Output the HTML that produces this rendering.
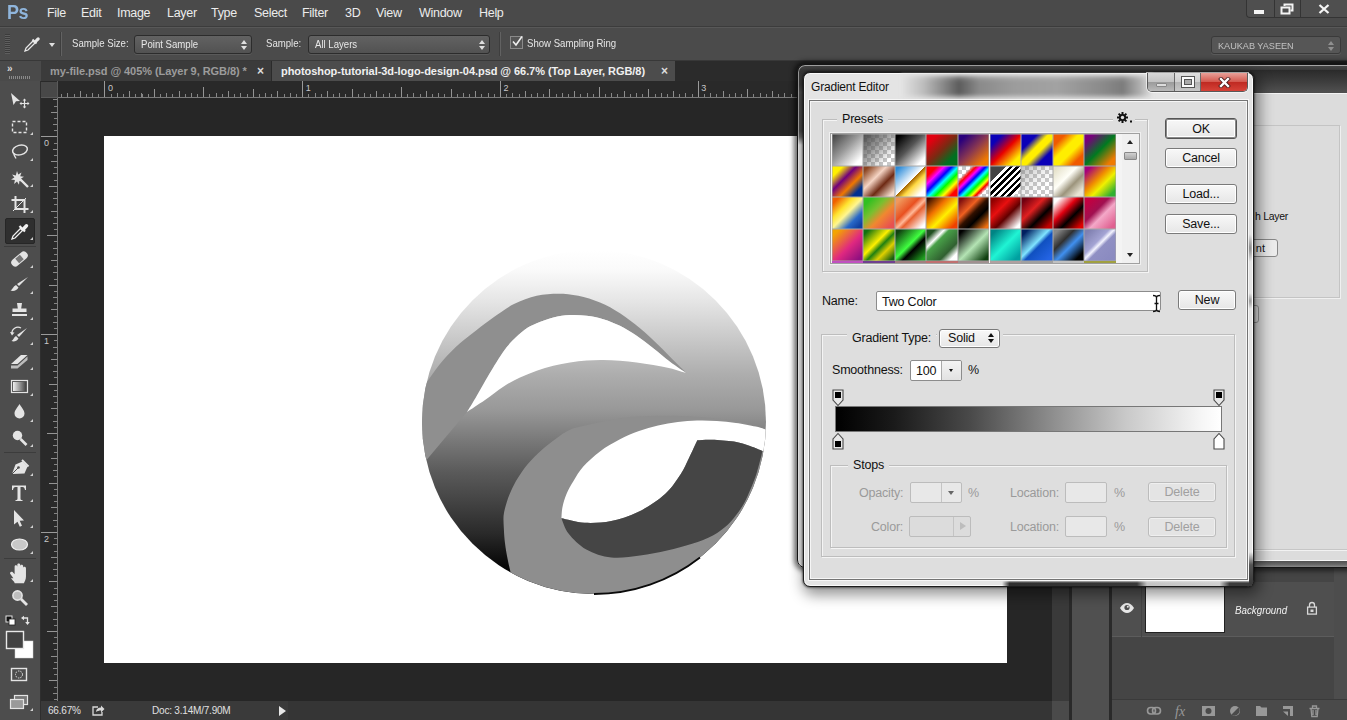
<!DOCTYPE html>
<html><head><meta charset="utf-8"><title>Photoshop</title>
<style>
*{box-sizing:border-box;margin:0;padding:0}
html,body{width:1347px;height:720px;overflow:hidden;background:#262626;font-family:"Liberation Sans",sans-serif;}
.abs{position:absolute}
#root{position:relative;width:1347px;height:720px;overflow:hidden;background:#262626}
/* menu bar */
#menubar{left:0;top:0;width:1347px;height:27px;background:#4a4a4a;border-bottom:1px solid #3c3c3c}
#menubar span{position:absolute;top:6px;font-size:12.5px;color:#ececec;white-space:nowrap;letter-spacing:-.3px}
#pslogo{position:absolute;left:7px;top:1px;font-size:20px;font-weight:bold;color:#8fb5dc;letter-spacing:-0.5px;transform:scaleX(.9);transform-origin:0 0}
.wbtn{position:absolute;top:0;height:18px;background:#4f4f4f;border-left:1px solid #343434;border-bottom:1px solid #343434}
/* options bar */
#optbar{left:0;top:27px;width:1347px;height:34px;background:#4b4b4b;border-top:1px solid #585858;border-bottom:1px solid #383838}
#optbar .lbl{position:absolute;top:9px;font-size:11.5px;color:#e6e6e6;white-space:nowrap;transform:scaleX(.835);transform-origin:0 0}
.dd{position:absolute;height:19px;background:linear-gradient(#626262,#525252);border:1px solid #2c2c2c;border-radius:3px;box-shadow:0 1px 0 #5a5a5a;font-size:11.5px;color:#e8e8e8;white-space:nowrap}
.dd i{position:absolute;left:6px;top:2px;font-style:normal;transform:scaleX(.835);transform-origin:0 0}
.dd:after{content:"";position:absolute;right:4px;top:4px;border:3px solid transparent;border-bottom:4px solid #e0e0e0;border-top:0}
.dd:before{content:"";position:absolute;right:4px;top:10px;border:3px solid transparent;border-top:4px solid #e0e0e0;border-bottom:0}
#kdd:after{border-bottom-color:#909090;right:6px}#kdd:before{border-top-color:#909090;right:6px}
/* tabs */
#tabbar{left:0;top:61px;width:1347px;height:20px;background:#2b2b2b}
.tab{position:absolute;top:0;height:20px;font-size:11px;font-weight:bold;white-space:nowrap;padding-top:4px;letter-spacing:-.06px}
/* ruler */
.ruler{background:#2b2b2b}
.rnum{position:absolute;font-size:9px;color:#c8c8c8}
</style></head><body><div id="root">
<!-- canvas area -->
<div class="abs" style="left:57px;top:98px;width:995px;height:603px;background:#262626"></div>
<div class="abs" id="doc" style="left:104px;top:136px;width:903px;height:527px;background:#fff"></div>

<!-- menubar -->
<div class="abs" id="menubar">
<div id="pslogo">Ps</div>
<span style="left:47px">File</span><span style="left:81px">Edit</span><span style="left:117px">Image</span><span style="left:167px">Layer</span><span style="left:211px">Type</span><span style="left:254px">Select</span><span style="left:302px">Filter</span><span style="left:345px">3D</span><span style="left:376px">View</span><span style="left:419px">Window</span><span style="left:479px">Help</span>
<div class="wbtn" style="left:1246px;width:28px;border-radius:0 0 0 4px"><div class="abs" style="left:7px;top:10px;width:10px;height:3.500px;background:#f4f4f4"></div></div>
<div class="wbtn" style="left:1274px;width:26px">
 <svg class="abs" style="left:5px;top:3px" width="14" height="12" viewBox="0 0 14 12"><path d="M4.500 3V1.500h8v6h-2" fill="none" stroke="#f4f4f4" stroke-width="2"/><rect x="1.500" y="4.500" width="8" height="6" fill="#4f4f4f" stroke="#f4f4f4" stroke-width="2"/></svg>
</div>
<div class="wbtn" style="left:1300px;width:47px"><svg class="abs" style="left:17px;top:4px" width="12" height="10" viewBox="0 0 12 10"><path d="M1.500 1l9 8M10.500 1l-9 8" stroke="#f4f4f4" stroke-width="2.300"/></svg></div>
</div>

<!-- options bar -->
<div class="abs" id="optbar">
 <div class="abs" style="left:5px;top:6px;width:5px;height:20px;background:repeating-linear-gradient(to bottom,#3c3c3c 0 1px,#5e5e5e 1px 2px)"></div>
 <svg class="abs" style="left:23px;top:7px" width="18" height="18" viewBox="0 0 18 18"><path d="M2 16l1-3 7-7 2 2-7 7z" fill="none" stroke="#e8e8e8" stroke-width="1.3"/><path d="M9.5 4.5l4 4" stroke="#e8e8e8" stroke-width="2"/><path d="M11 6l3-3.2a1.6 1.6 0 0 1 2.3 2.3L13 8z" fill="#e8e8e8"/></svg>
 <div class="abs" style="left:49px;top:15px;border:3.5px solid transparent;border-top:4px solid #e0e0e0;border-bottom:0"></div>
 <div class="abs" style="left:60px;top:4px;width:1px;height:24px;background:#3e3e3e;box-shadow:1px 0 0 #626262"></div>
 <span class="lbl" style="left:72px">Sample Size:</span>
 <div class="dd" style="left:134px;top:7px;width:118px"><i>Point Sample</i></div>
 <span class="lbl" style="left:266px">Sample:</span>
 <div class="dd" style="left:308px;top:7px;width:182px"><i>All Layers</i></div>
 <div class="abs" style="left:499px;top:4px;width:1px;height:24px;background:#3e3e3e;box-shadow:1px 0 0 #626262"></div>
 <div class="abs" style="left:510px;top:8px;width:13px;height:13px;background:#555;border:1px solid #8a8a8a"></div>
 <svg class="abs" style="left:510px;top:6px" width="15" height="15" viewBox="0 0 15 15"><path d="M3 7.5l3 3.5 6-8.5" fill="none" stroke="#f0f0f0" stroke-width="1.6"/></svg>
 <span class="lbl" style="left:527px">Show Sampling Ring</span>
 <div class="dd" style="left:1211px;top:8px;width:130px;height:18px;color:#c2c2c2;font-size:9.500px;background:#565656;border-color:#3a3a3a" id="kdd"><i style="transform:scaleX(.96);top:3px">KAUKAB YASEEN</i></div>
</div>

<!-- tab bar -->
<div class="abs" id="tabbar">
 <div class="abs" style="left:0;top:0;width:41px;height:20px;background:#4a4a4a"></div>
 <div class="abs" style="left:7px;top:2px;font-size:10px;font-weight:bold;color:#d8d8d8;letter-spacing:-1px">&#187;</div>
 <div class="tab" style="left:41px;width:230px;background:#3b3b3b;color:#9c9c9c;padding-left:9px">my-file.psd @ 405% (Layer 9, RGB/8) *<span style="position:absolute;left:216px;top:3px;color:#dcdcdc;font-size:12px">&#215;</span></div>
 <div class="tab" style="left:272px;width:403px;background:#4c4c4c;color:#f0f0f0;padding-left:9px">photoshop-tutorial-3d-logo-design-04.psd @ 66.7% (Top Layer, RGB/8)<span style="position:absolute;left:389px;top:3px;color:#dcdcdc;font-size:12px">&#215;</span></div>
</div>

<!-- rulers -->
<div class="abs ruler" style="left:41px;top:81px;width:1011px;height:17px;border-bottom:1px solid #7a7a7a;overflow:hidden;
 background:
 repeating-linear-gradient(to right,#9a9a9a 0 1px,transparent 1px 197.8000px) -134.40px 0.0px/1209px 16px no-repeat,
 repeating-linear-gradient(to right,#959595 0 1px,transparent 1px 98.9000px) -35.50px 5.5px/1110px 10.5px no-repeat,
 repeating-linear-gradient(to right,#939393 0 1px,transparent 1px 49.4500px) -35.50px 7.5px/1060px 8.5px no-repeat,
 repeating-linear-gradient(to right,#8e8e8e 0 1px,transparent 1px 24.7250px) -10.78px 10.0px/1036px 6px no-repeat,
 repeating-linear-gradient(to right,#888 0 1px,transparent 1px 12.3625px) -10.78px 11.5px/1023px 4.5px no-repeat,
 repeating-linear-gradient(to right,#848484 0 1px,transparent 1px 6.1813px) -4.59px 13.0px/1017px 3px no-repeat,
 #292929">
 <span class="rnum" style="left:66.9px;top:2px">0</span><span class="rnum" style="left:264.7px;top:2px">1</span><span class="rnum" style="left:462.5px;top:2px">2</span><span class="rnum" style="left:660.3px;top:2px">3</span>
</div>
<div class="abs ruler" style="left:41px;top:98px;width:17px;height:603px;border-right:1px solid #7a7a7a;overflow:hidden;
 background:
 repeating-linear-gradient(to bottom,#9a9a9a 0 1px,transparent 1px 197.8000px) 0.0px -159.40px/16px 801px no-repeat,
 repeating-linear-gradient(to bottom,#959595 0 1px,transparent 1px 98.9000px) 5.5px -60.50px/10.5px 702px no-repeat,
 repeating-linear-gradient(to bottom,#939393 0 1px,transparent 1px 49.4500px) 7.5px -11.05px/8.5px 652px no-repeat,
 repeating-linear-gradient(to bottom,#8e8e8e 0 1px,transparent 1px 24.7250px) 10.0px -11.05px/6px 628px no-repeat,
 repeating-linear-gradient(to bottom,#888 0 1px,transparent 1px 12.3625px) 11.5px -11.05px/4.5px 615px no-repeat,
 repeating-linear-gradient(to bottom,#848484 0 1px,transparent 1px 6.1813px) 13.0px -4.87px/3px 609px no-repeat,
 #292929">
 <span class="rnum" style="left:3px;top:39.9px">0</span><span class="rnum" style="left:3px;top:237.7px">1</span><span class="rnum" style="left:3px;top:435.5px">2</span>
</div>
<div class="abs" style="left:41px;top:81px;width:17px;height:17px;background:#292929;border-right:1px solid #5a5a5a;border-bottom:1px solid #5a5a5a"><div class="abs" style="left:0;top:1px;width:16px;height:15px;background:#484848"></div></div>

<!-- status bar -->
<div class="abs" style="left:41px;top:701px;width:1011px;height:19px;background:#353535"></div>
<div class="abs" style="left:41px;top:701px;width:247px;height:19px;background:#3a3a3a;font-size:10px;color:#e0e0e0;letter-spacing:-.2px">
 <span class="abs" style="left:7px;top:4px">66.67%</span>
 <svg class="abs" style="left:50px;top:3px" width="15" height="13" viewBox="0 0 15 13"><path d="M7 3H2v8h9V8" fill="none" stroke="#d8d8d8" stroke-width="1.3"/><path d="M5 8c0-3 2-4.5 5-4.5V1.5l3.5 3.5L10 8.500V6.500C8 6.500 6.500 7 5 8z" fill="#d8d8d8"/></svg>
 <span class="abs" style="left:111px;top:4px">Doc: 3.14M/7.90M</span>
 <div class="abs" style="left:238px;top:5px;border:5px solid transparent;border-left:7px solid #e8e8e8;border-right:0"></div>
</div>
<!-- vertical scrollbar -->
<div class="abs" style="left:1052px;top:81px;width:17px;height:620px;background:#3a3a3a"></div>
<div class="abs" style="left:1052px;top:701px;width:17px;height:19px;background:#4a4a4a"></div>
<!-- right panels -->
<div class="abs" style="left:1069px;top:61px;width:3px;height:659px;background:#2a2a2a"></div>
<div class="abs" style="left:1072px;top:61px;width:37px;height:659px;background:#505050"></div>
<div class="abs" style="left:1109px;top:61px;width:3px;height:659px;background:#2a2a2a"></div>
<div class="abs" style="left:1112px;top:61px;width:235px;height:659px;background:#454545"></div>
<div class="abs" style="left:1112px;top:582px;width:222px;height:55px;background:#4f4f4f;border-bottom:1px solid #5c5c5c"></div>
<div class="abs" style="left:1334px;top:560px;width:13px;height:140px;background:#4d4d4d"></div>
<div class="abs" style="left:1141px;top:582px;width:1px;height:55px;background:#444"></div>
<div class="abs" style="left:1069px;top:61px;width:278px;height:4px;background:#262626"></div>
<!-- layer row -->
<svg class="abs" style="left:1119px;top:602px" width="16" height="12" viewBox="0 0 16 12"><path d="M1 6c2-3.500 4.500-5 7-5s5 1.500 7 5c-2 3.500-4.500 5-7 5S3 9.500 1 6z" fill="#e8e8e8"/><circle cx="8" cy="5.500" r="2.600" fill="#4f4f4f"/><circle cx="8.800" cy="4.800" r="1" fill="#e8e8e8"/></svg>
<div class="abs" style="left:1145px;top:585px;width:80px;height:48px;background:#fff;border:1px solid #222"></div>
<div class="abs" style="left:1235px;top:604px;font-size:10.500px;font-style:italic;color:#f2f2f2;transform:scaleX(.93);transform-origin:0 0">Background</div>
<svg class="abs" style="left:1306px;top:601px" width="12" height="15" viewBox="0 0 12 15"><path d="M3.500 6V4a2.500 2.500 0 0 1 5 0v2" fill="none" stroke="#d8d8d8" stroke-width="1.300"/><rect x="1.600" y="6.100" width="8.800" height="7" fill="none" stroke="#d8d8d8" stroke-width="1.300"/><rect x="4.500" y="8.500" width="3" height="2.500" fill="#d8d8d8"/></svg>
<!-- panel bottom bar -->
<div class="abs" style="left:1112px;top:699px;width:235px;height:21px;background:#4a4a4a;border-top:1px solid #3a3a3a"></div>
<svg class="abs" style="left:1146px;top:703px" width="190" height="16" viewBox="0 0 190 16">
 <g fill="none" stroke="#989898" stroke-width="1.600"><rect x="1.500" y="4.500" width="8" height="6.500" rx="3.200"/><rect x="6.500" y="4.500" width="8" height="6.500" rx="3.200"/></g>
 <text x="29" y="13" font-family="Liberation Serif" font-style="italic" font-size="14" fill="#989898">fx</text>
 <rect x="56" y="3" width="13" height="10" fill="#989898"/><circle cx="62.500" cy="8" r="3" fill="#4a4a4a"/>
 <circle cx="89" cy="8" r="5" fill="#989898"/><path d="M85.500 11.500A5 5 0 0 0 92.500 4.500z" fill="#4a4a4a"/>
 <path d="M110 3h4l1.500 1.500H121V13h-11z" fill="#989898"/>
 <path d="M137 3h10v10h-3V6h-7z" fill="#989898"/><path d="M137 8.500h5V13z" fill="#989898"/>
 <path d="M163.500 5.500h10M165 5.500l.8 8h5.400l.8-8M166.500 5v-2h4v2M167 7v5M170 7v5" fill="none" stroke="#989898" stroke-width="1.300"/>
</svg>
<svg class="abs" style="left:404px;top:240px" width="380" height="370" viewBox="404 240 380 370">
<defs>
<linearGradient id="lg" gradientUnits="userSpaceOnUse" x1="0" y1="250" x2="0" y2="580">
<stop offset="0" stop-color="#ffffff"/><stop offset="0.06" stop-color="#fafafa"/><stop offset="0.152" stop-color="#e6e6e6"/><stop offset="0.303" stop-color="#c0c0c0"/><stop offset="0.379" stop-color="#adadad"/><stop offset="0.485" stop-color="#989898"/><stop offset="0.579" stop-color="#787878"/><stop offset="0.673" stop-color="#5a5a5a"/><stop offset="0.764" stop-color="#434343"/><stop offset="0.858" stop-color="#2a2a2a"/><stop offset="0.955" stop-color="#080808"/><stop offset="1" stop-color="#000"/>
</linearGradient>
<clipPath id="cc"><circle cx="594" cy="422" r="172"/></clipPath>
</defs>
<g clip-path="url(#cc)">
<rect x="404" y="240" width="380" height="370" fill="url(#lg)"/>
<path d="M415.0 400.0C417.2 396.7 423.6 386.7 428.3 380.0C433.0 373.3 438.0 366.1 443.3 360.0C448.6 353.9 454.4 348.3 460.0 343.3C465.6 338.3 471.1 334.3 476.7 330.0C482.2 325.7 487.1 321.8 493.3 317.5C499.5 313.2 506.8 307.6 514.0 304.0C521.2 300.4 529.3 297.5 536.7 295.8C544.1 294.1 551.4 293.7 558.3 293.7C565.2 293.7 571.3 294.3 578.3 295.8C585.2 297.3 593.0 299.6 600.0 302.5C607.0 305.4 613.3 309.0 620.0 313.3C626.7 317.6 633.6 323.0 640.0 328.3C646.4 333.6 652.5 339.4 658.3 345.0C664.1 350.6 670.3 357.0 675.0 361.7C679.7 366.4 684.8 371.4 686.7 373.3C683.9 371.4 675.6 365.9 670.0 361.7C664.4 357.5 658.8 352.6 653.3 348.3C647.8 344.0 642.2 339.6 636.7 335.8C631.2 332.1 625.6 328.6 620.0 325.8C614.4 323.0 608.8 320.9 603.3 319.2C597.8 317.5 592.2 316.5 586.7 315.8C581.2 315.1 575.6 314.7 570.0 315.0C564.4 315.3 558.8 316.1 553.3 317.5C547.8 318.9 541.4 321.3 536.7 323.3C532.0 325.3 529.0 326.6 525.0 329.5C521.0 332.4 516.1 336.8 512.5 340.5C508.9 344.2 506.8 346.8 503.3 351.7C499.8 356.6 495.0 364.6 491.7 370.0C488.4 375.4 486.2 379.3 483.5 384.0C480.8 388.7 478.2 393.3 475.5 398.0C472.8 402.7 468.4 409.7 467.0 412.0L445.0 438.0L425.7 461.0L405.0 470.0L405.0 395.0Z" fill="#8f8f8f"/>
<path d="M686.7 373.3C683.9 371.4 675.6 365.9 670.0 361.7C664.4 357.5 658.8 352.6 653.3 348.3C647.8 344.0 642.2 339.6 636.7 335.8C631.2 332.1 625.6 328.6 620.0 325.8C614.4 323.0 608.8 320.9 603.3 319.2C597.8 317.5 592.2 316.5 586.7 315.8C581.2 315.1 575.6 314.7 570.0 315.0C564.4 315.3 558.8 316.1 553.3 317.5C547.8 318.9 541.4 321.3 536.7 323.3C532.0 325.3 529.0 326.6 525.0 329.5C521.0 332.4 516.1 336.8 512.5 340.5C508.9 344.2 506.8 346.8 503.3 351.7C499.8 356.6 495.0 364.6 491.7 370.0C488.4 375.4 486.2 379.3 483.5 384.0C480.8 388.7 478.2 393.3 475.5 398.0C472.8 402.7 468.4 409.7 467.0 412.0C470.0 410.0 478.9 404.2 485.0 400.0C491.1 395.8 497.5 390.4 503.3 386.7C509.1 382.9 514.4 380.1 520.0 377.5C525.6 374.9 531.2 372.8 536.7 370.8C542.2 368.9 547.8 367.2 553.3 365.8C558.8 364.4 564.4 363.4 570.0 362.5C575.6 361.6 581.2 360.9 586.7 360.5C592.2 360.1 597.8 359.9 603.3 360.0C608.8 360.1 614.4 360.4 620.0 360.8C625.6 361.2 631.2 361.8 636.7 362.5C642.2 363.2 647.8 364.0 653.3 365.0C658.8 366.0 664.4 366.9 670.0 368.3C675.6 369.7 683.9 372.5 686.7 373.3Z" fill="#fff"/>
<path d="M765.8 429.5C761.5 428.2 749.0 423.9 740.0 422.0C731.0 420.1 722.0 419.0 712.0 418.0C702.0 417.0 690.3 416.3 680.0 416.0C669.7 415.7 659.2 415.8 650.0 416.0C640.8 416.2 633.3 416.5 625.0 417.5C616.7 418.5 606.5 420.9 600.0 422.2C593.5 423.5 591.1 424.0 586.0 425.3C580.9 426.6 574.5 427.6 569.4 429.9C564.3 432.2 560.2 435.5 555.6 438.9C551.0 442.2 546.3 445.8 541.7 450.0C537.1 454.2 531.8 459.3 527.8 463.9C523.8 468.5 520.8 473.3 518.0 477.8C515.2 482.3 512.9 486.8 511.0 491.0C509.1 495.2 507.7 498.9 506.5 503.0C505.3 507.1 504.0 511.2 503.6 515.6C503.2 520.0 503.7 524.8 503.9 529.4C504.1 534.0 504.4 538.2 505.0 543.3C505.6 548.4 506.6 554.2 507.8 560.0C509.0 565.8 511.3 575.0 512.0 578.0L510.0 610.0L790.0 610.0L790.0 429.5Z" fill="#8e8e8e"/>
<path d="M561.4 518.3C561.6 516.4 561.6 511.1 562.5 507.0C563.4 502.9 564.7 498.3 566.5 494.0C568.3 489.7 570.7 485.6 573.5 481.0C576.3 476.4 578.9 471.4 583.3 466.5C587.7 461.6 594.0 455.9 600.0 451.4C606.0 446.9 613.0 442.9 619.5 439.5C626.0 436.1 632.6 433.3 639.0 431.0C645.4 428.7 651.5 427.0 658.0 425.5C664.5 424.0 671.3 422.8 677.8 422.0C684.3 421.2 690.5 420.7 697.0 420.5C703.5 420.3 710.2 420.5 716.7 420.9C723.2 421.3 729.5 421.9 736.0 422.9C742.5 423.8 750.6 425.5 755.6 426.6C760.6 427.7 764.0 429.0 765.7 429.5L790.0 429.5L790.0 451.0L762.4 451.0C760.3 450.2 754.7 447.6 750.0 446.0C745.3 444.4 740.3 442.7 734.0 441.6C727.7 440.6 718.1 439.9 712.0 439.7C705.9 439.5 699.8 440.1 697.3 440.2C695.9 443.2 691.6 452.7 688.9 458.3C686.1 463.9 684.8 468.0 680.8 474.0C676.8 480.0 671.9 487.9 664.8 494.3C657.7 500.7 646.9 507.7 638.0 512.1C629.1 516.6 620.2 519.2 611.3 521.0C602.4 522.8 592.9 523.2 584.6 522.8C576.3 522.3 565.3 519.0 561.4 518.3Z" fill="#fff"/>
<path d="M697.3 440.2C699.8 440.1 705.9 439.5 712.0 439.7C718.1 439.9 727.7 440.6 734.0 441.6C740.3 442.7 745.3 444.4 750.0 446.0C754.7 447.6 760.3 450.2 762.4 451.0C762.1 452.2 761.8 454.4 760.8 458.0C759.8 461.6 758.4 467.6 756.7 472.9C755.0 478.2 752.5 484.6 750.4 489.6C748.3 494.6 746.6 498.8 744.2 503.1C741.8 507.4 738.6 512.0 735.8 515.6C733.0 519.2 731.3 521.7 727.5 525.0C723.7 528.3 718.8 532.3 712.9 535.4C707.0 538.5 699.7 541.3 692.1 543.8C684.5 546.3 675.8 548.5 667.1 550.5C658.4 552.5 649.3 554.3 640.0 555.5C630.7 556.7 620.2 558.5 611.3 557.5C602.3 556.5 593.4 553.5 586.3 549.5C579.2 545.5 572.6 538.7 568.5 533.5C564.4 528.3 562.6 520.8 561.4 518.3C565.3 519.0 576.3 522.3 584.6 522.8C592.9 523.2 602.4 522.8 611.3 521.0C620.2 519.2 629.1 516.6 638.0 512.1C646.9 507.7 657.7 500.7 664.8 494.3C671.9 487.9 676.8 480.0 680.8 474.0C684.8 468.0 686.1 463.9 688.9 458.3C691.6 452.7 695.9 443.2 697.3 440.2Z" fill="#454545"/>
</g>
<path d="M594 594A172 172 0 0 0 700 557.500" fill="none" stroke="#0a0a0a" stroke-width="1.800"/>
</svg>
<!-- toolbar -->
<div class="abs" style="left:0;top:81px;width:41px;height:639px;background:#4d4d4d;border-right:1px solid #2e2e2e"></div>
<div class="abs" style="left:9px;top:76px;width:22px;height:3px;background:repeating-linear-gradient(to right,#8a8a8a 0 1px,transparent 1px 2px)"></div>
<div class="abs" style="left:5px;top:218px;width:30px;height:26px;background:#2f2f2f;border:1px solid #262626;border-radius:2px"></div>
<div class="abs" style="left:4px;top:246px;width:32px;height:1px;background:#3c3c3c"></div>
<div class="abs" style="left:4px;top:452px;width:32px;height:1px;background:#3c3c3c"></div>
<div class="abs" style="left:4px;top:558px;width:32px;height:1px;background:#3c3c3c"></div>
<svg class="abs" style="left:0;top:81px" width="40" height="639" viewBox="0 81 40 639" fill="#e4e4e4" stroke="none">
 <!-- move -->
 <path d="M11 93l9 8-4 .3-2.500 3.700z"/><path d="M24.500 100v7M21 103.500h7" stroke="#e4e4e4" stroke-width="1.200"/><path d="M24.500 98.500l1.800 2h-3.600zM24.500 108.500l1.800-2h-3.600zM19.500 103.500l2-1.800v3.600zM29.500 103.500l-2-1.800v3.600z"/>
 <!-- marquee -->
 <rect x="12.500" y="121.500" width="14" height="11" fill="none" stroke="#e4e4e4" stroke-width="1.400" stroke-dasharray="3 2"/>
 <!-- lasso -->
 <ellipse cx="20" cy="150" rx="7.500" ry="4.800" fill="none" stroke="#e4e4e4" stroke-width="1.500" transform="rotate(-15 20 150)"/><path d="M14.500 153.500c-1.500 1 .5 3 1.500 5" fill="none" stroke="#e4e4e4" stroke-width="1.300"/>
 <!-- magic wand -->
 <path d="M19 178l9 9" stroke="#e4e4e4" stroke-width="2.400"/><path d="M17 171l1.200 3.600 3.300-2-1.300 3.600 3.800.6-3.300 2 2.400 3-3.700-.9-.4 3.800-2-3.300-2.900 2.500.8-3.800-3.800-.5 3.300-2-2.300-3 3.700.9z"/>
 <!-- crop -->
 <path d="M15.500 196v13h13M11.500 200h13v13" fill="none" stroke="#e4e4e4" stroke-width="2"/><path d="M13 211l13-13" stroke="#e4e4e4" stroke-width="1"/>
 <!-- eyedropper -->
 <path d="M12 239l1-3 7.500-7.500 2 2L15 238z" fill="none" stroke="#f0f0f0" stroke-width="1.300"/><path d="M19.500 226l5.500 5.500" stroke="#f0f0f0" stroke-width="2.200"/><path d="M22 228l3.200-3.400a1.700 1.700 0 0 1 2.500 2.500L24.500 230.500z" fill="#f0f0f0"/>
 <!-- healing -->
 <g transform="rotate(-40 19.500 259)"><rect x="10" y="255" width="19" height="8" rx="4" fill="#e4e4e4"/><rect x="16.500" y="256" width="6" height="6" fill="#777"/></g>
 <!-- brush -->
 <path d="M28 277l-9 9-2-2z"/><path d="M16 285l2.500 2.500c-1.500 3-5 4-8 3 2-1 2.500-4 5.500-5.500z"/>
 <!-- stamp -->
 <path d="M17 303h5l-.8 5.500h5.300v3.500h-14v-3.500h5.300z"/><rect x="12" y="314" width="15" height="2"/>
 <!-- history brush -->
 <path d="M27 328l-8 9-2-2z"/><path d="M16 336l2.500 2.500c-1.500 2.500-4.500 3.500-7 2.500 2-1 2-3.500 4.500-5z"/><path d="M12 334a6 6 0 0 1 9-6" fill="none" stroke="#e4e4e4" stroke-width="1.300"/><path d="M10 332l2 3.500 2.500-3z"/>
 <!-- eraser -->
 <path d="M11 364l10-9h6.500l-10 9z"/><path d="M11 365.500l6.500 0 10-9v3.500l-10 8.500H11z" fill="#bdbdbd"/>
 <!-- gradient -->
 <rect x="11.500" y="380.500" width="16" height="12" fill="none" stroke="#e4e4e4" stroke-width="1.200"/>
 <defs><linearGradient id="tg" x1="0" x2="1"><stop offset="0" stop-color="#f0f0f0"/><stop offset="1" stop-color="#444"/></linearGradient></defs><rect x="13" y="382" width="13" height="9" fill="url(#tg)"/>
 <!-- blur drop -->
 <path d="M19.500 404c2.500 4 5 6.500 5 9.500a5 5 0 0 1-10 0c0-3 2.500-5.500 5-9.500z"/>
 <!-- dodge -->
 <circle cx="17.500" cy="435.500" r="4.700"/><path d="M20.500 439l6 6" stroke="#e4e4e4" stroke-width="2.600"/>
 <!-- pen -->
 <path d="M12 474l3.500-9.500 7-3 5 5-3 7z"/><path d="M12 474l6-6" stroke="#4d4d4d" stroke-width="1"/><circle cx="18.500" cy="467.500" r="1.300" fill="#4d4d4d"/><path d="M22 460l6.500 6.500" stroke="#e4e4e4" stroke-width="2"/>
 <!-- T -->
 <path d="M12 485.500h14v4.500h-1c-.3-2-1-3-2.500-3h-2v11.500c0 1 .5 1.500 2 1.500v1h-7v-1c1.500 0 2-.5 2-1.500V487h-2c-1.500 0-2.200 1-2.500 3h-1z"/>
 <!-- path select -->
 <path d="M14 510l10 10.500-4.300.2 2.300 5-2.200 1-2.300-5-3.500 2.800z"/>
 <!-- ellipse -->
 <ellipse cx="19.500" cy="544.500" rx="8" ry="5.500" fill="#c8c8c8" stroke="#f0f0f0" stroke-width="1.200"/>
 <!-- hand -->
 <g transform="translate(19.500 574) scale(1.22) translate(-18.500 -567.500)"><path d="M13.500 571l-2.500-3.500c-1-1.500 1-2.500 2-1.500l1.500 1.800v-6.300c0-1.500 2-1.500 2.200 0v-1.500c0-1.500 2.200-1.500 2.400 0v1c.2-1.500 2.400-1.300 2.400.2v1.300c.2-1.300 2.300-1.100 2.300.4v6.600c0 3-1.200 4-1.700 5.500h-7.500c-.5-1.500-2-2.500-3.100-4z"/></g>
 <!-- zoom -->
 <circle cx="17.500" cy="595.500" r="4.600" fill="#bdbdbd" stroke="#e4e4e4" stroke-width="1.600"/><path d="M21 599l6 6" stroke="#e4e4e4" stroke-width="2.800"/>
 <!-- small default colors / swap -->
 <rect x="6" y="616" width="6" height="6" fill="#111" stroke="#e4e4e4" stroke-width="1"/><rect x="9" y="619" width="6" height="6" fill="#fff" stroke="#222" stroke-width=".8"/>
 <path d="M23 618h4.500v4.500" fill="none" stroke="#e4e4e4" stroke-width="1.300"/><path d="M21 618l3-2.300v4.600zM27.500 625l-2.300-3h4.600z"/>
 <!-- fg/bg -->
 <rect x="15" y="641" width="18" height="17" fill="#fff" stroke="#d0d0d0" stroke-width=".5"/>
 <rect x="6.500" y="631.500" width="17" height="17" fill="#424242" stroke="#e8e8e8" stroke-width="1.400"/>
 <!-- quick mask -->
 <rect x="11.500" y="668.500" width="15" height="12" fill="none" stroke="#e4e4e4" stroke-width="1.400"/><circle cx="19" cy="674.500" r="3.500" fill="none" stroke="#e4e4e4" stroke-width="1" stroke-dasharray="1.500 1"/>
 <!-- screen mode -->
 <rect x="14.500" y="695.500" width="13" height="9" fill="#777" stroke="#e4e4e4" stroke-width="1.200"/><rect x="10.500" y="699.500" width="13" height="9" fill="#999" stroke="#e4e4e4" stroke-width="1.200"/>
 <!-- corner triangles -->
 <g fill="#d0d0d0"><path d="M33 135v-3l-3 3zM33 161v-3l-3 3zM33 187v-3l-3 3zM33 213v-3l-3 3zM33 240v-3l-3 3zM33 268v-3l-3 3zM33 294v-3l-3 3zM33 320v-3l-3 3zM33 345v-3l-3 3zM33 370v-3l-3 3zM33 396v-3l-3 3zM33 422v-3l-3 3zM33 447v-3l-3 3zM33 476v-3l-3 3zM33 502v-3l-3 3zM33 528v-3l-3 3zM33 554v-3l-3 3zM33 582v-3l-3 3zM33 711v-3l-3 3z"/></g>
</svg>

<style>
#dlg{font-size:12.5px;color:#111;letter-spacing:-.2px}
#dlg .t{position:absolute;white-space:nowrap;margin-top:1px}
#dlg .btn{position:absolute;border:1px solid #7a7a7a;border-radius:3px;background:linear-gradient(#f8f8f8,#e6e6e6);text-align:center;font-size:12.5px;box-shadow:inset 0 0 0 1px #fff}
#dlg .gb{position:absolute;border:1px solid #bdbdbd;box-shadow:inset 1px 1px 0 #f4f4f4,1px 1px 0 #f4f4f4}
#dlg .inp{position:absolute;background:#fff;border:1px solid #8c8c8c;border-radius:2px}
#dlg .dis{color:#9a9a9a}
#dlg .dinp{position:absolute;background:#e8e8e8;border:1px solid #bcbcbc;border-radius:2px}
#dlg .dbtn{position:absolute;border:1px solid #bcbcbc;border-radius:3px;background:#e4e4e4;text-align:center;font-size:12.5px;color:#a0a0a0;box-shadow:inset 0 0 0 1px #efefef}
</style>
<!-- back dialog (behind) -->
<div class="abs" style="left:797px;top:64px;width:570px;height:504px;border-radius:8px;border:1px solid #151515;box-shadow:inset 0 0 0 1px rgba(255,255,255,.5),0 0 5px 3px rgba(0,0,0,.55);
 background:linear-gradient(to bottom,#4a4a4a 0,#363636 6px,#3c3c3c 20px,#505050 28px,rgba(80,80,80,0) 29px),linear-gradient(to bottom,#4e4e4e 0,#4a4a4a 66px,#6a6a6a 72px,#e6e6e6 80px,#e6e6e6 100%)"></div>
<div class="abs" style="left:1250px;top:70px;width:97px;height:22px;background:linear-gradient(to bottom,#2a2a2a,#3c3c3c 50%,#505050)"></div>
<div class="abs" style="left:1250px;top:93px;width:97px;height:468px;background:#dcdcdc;border-top:1px solid #f4f4f4;border-bottom:1px solid #f8f8f8"></div>
<div class="abs" style="left:1250px;top:125px;width:90px;height:173px;border:1px solid #c4c4c4;border-left:0;box-shadow:1px 1px 0 #f0f0f0"></div>
<div class="abs" style="left:1255px;top:210px;font-size:10.500px;color:#111;letter-spacing:-.3px">h Layer</div>
<div class="abs" style="left:1240px;top:239px;width:38px;height:18px;border:1px solid #888;border-radius:3px;background:#ececec;font-size:11px;color:#111;text-align:right;padding:2px 12px 0 0">nt</div>
<div class="abs" style="left:1240px;top:305px;width:19px;height:18px;border:1px solid #999;border-radius:3px;background:#e4e4e4"></div>

<div class="abs" style="left:1250px;top:549px;width:97px;height:2px;background:#c6c6c6;border-bottom:1px solid #f2f2f2"></div>
<div class="abs" style="left:1250px;top:561px;width:97px;height:6px;background:linear-gradient(#505050,#6a6a6a 60%,#8a8a8a)"></div>
<!-- gradient editor dialog -->
<div class="abs" id="dlg" style="left:797px;top:65px;width:460px;height:525px">
 <div class="abs" style="left:6px;top:7px;width:451px;height:515px;border-radius:7px;border:1px solid #1c1c1c;
  background:
   radial-gradient(ellipse 4px 14px at 446px 175px,rgba(60,60,60,.55),rgba(60,60,60,0)),
   radial-gradient(ellipse 4px 8px at 446px 228px,rgba(60,60,60,.45),rgba(60,60,60,0)),
   #e4e4e4;box-shadow:inset 0 0 0 1px #fafafa,0 0 2px 1px rgba(0,0,0,.45),3px 5px 14px 3px rgba(0,0,0,.42)"></div>
 <div class="abs" style="left:104px;top:9px;width:252px;height:25px;filter:blur(1.500px);background:linear-gradient(to bottom,rgba(228,228,228,.9) 0,rgba(228,228,228,.2) 16%,rgba(228,228,228,0) 32%,rgba(228,228,228,0) 78%,rgba(228,228,228,.8) 100%),linear-gradient(to right,rgba(228,228,228,1) 0,#bcbcbc 9%,#8e8e8e 16%,#5c5c5c 23%,#8a8a8a 31%,#9c9c9c 45%,#a2a2a2 62%,#8a8a8a 80%,#7c7c7c 88%,#b0b0b0 95%,rgba(228,228,228,1) 100%)"></div>
 <div class="t" style="left:14px;top:14px;font-size:12px;color:#111">Gradient Editor</div>
 <div class="abs" style="left:205px;top:516px;width:250px;height:5px;background:linear-gradient(to bottom,rgba(228,228,228,.75),rgba(228,228,228,0) 40%),linear-gradient(to right,rgba(51,51,51,0) 0,#303030 3%,#383838 54%,#c4c4c4 58%,#cfcfcf 87%,#3c3c3c 91%,#3c3c3c 100%)"></div>
 <div class="abs" style="left:452px;top:487px;width:4px;height:32px;background:linear-gradient(to bottom,rgba(60,60,60,0),#555 40%,#383838)"></div>
 <!-- caption buttons -->
 <div class="abs" style="left:350px;top:8px;width:101px;height:19px;border:1px solid #5a5a5a;border-top:0;border-radius:0 0 5px 5px;overflow:hidden;box-shadow:0 0 0 1px rgba(255,255,255,.6)">
  <div class="abs" style="left:0;top:0;width:27px;height:19px;background:linear-gradient(#d8d8d8,#c4c4c4 45%,#9c9c9c 50%,#bcbcbc);border-right:1px solid #6a6a6a"><div class="abs" style="left:8px;top:10px;width:11px;height:4px;background:#dcdcdc;border:1px solid #888;border-radius:1px"></div></div>
  <div class="abs" style="left:27px;top:0;width:26px;height:19px;background:linear-gradient(#e0e0e0,#cfcfcf 45%,#b4b4b4 50%,#cacaca);border-right:1px solid #6a6a6a"><div class="abs" style="left:7px;top:4px;width:12px;height:10px;border:2px solid #fafafa;outline:1px solid #555;background:#aaa;box-shadow:inset 0 0 0 1px #555"></div></div>
  <div class="abs" style="left:53px;top:0;width:48px;height:19px;background:linear-gradient(#e8a098,#d45a50 45%,#c02a22 50%,#d8453a)"><svg class="abs" style="left:17px;top:4px" width="13" height="11" viewBox="0 0 13 11"><path d="M3 2l7 7M10 2L3 9" stroke="#4a1a1a" stroke-width="4" stroke-linecap="square"/><path d="M3 2l7 7M10 2L3 9" stroke="#fff" stroke-width="2.400" stroke-linecap="square"/></svg></div>
 </div>
 <!-- client -->
 <div class="abs" style="left:12px;top:35px;width:439px;height:480px;background:#dedede;border:1px solid #747474;box-shadow:inset 0 0 0 1px #f6f6f6, 0 0 0 1px rgba(255,255,255,.7)"></div>

 <!-- Presets group -->
 <div class="gb" style="left:25px;top:54px;width:326px;height:153px"></div>
 <div class="t" style="left:40px;top:46px;background:#dedede;padding:0 5px">Presets</div>
 <div class="abs" style="left:316px;top:45px;width:22px;height:16px;background:#dedede"></div>
 <svg class="abs" style="left:319px;top:46px" width="18" height="14" viewBox="0 0 18 14"><g fill="#111"><circle cx="6.500" cy="6.500" r="3.600"/><g stroke="#111" stroke-width="2"><path d="M6.500 1v11M1 6.500h11M2.600 2.600l7.800 7.800M10.400 2.600l-7.800 7.800"/></g></g><circle cx="6.500" cy="6.500" r="1.700" fill="#dedede"/><rect x="14" y="9.500" width="2" height="2" fill="#111"/></svg>
 <div class="abs" style="left:33px;top:68px;width:310px;height:131px;background:#f4f4f4;border:1px solid #a0a0a0;box-shadow:0 0 0 1px #f0f0f0"></div>
 <div class="abs" style="left:34.500px;top:69px;width:285px;height:129.500px;overflow:hidden">
<div class="abs" style="left:0.0px;top:0.0px;width:31.6px;height:31.7px;background:linear-gradient(135deg,#3c3c3c,#9a9a9a 45%,#fff 85%);box-shadow:inset 0 0 0 .5px #a8a8a8"></div>
<div class="abs" style="left:31.6px;top:0.0px;width:31.6px;height:31.7px;background:linear-gradient(135deg,#4a4a4a,rgba(90,90,90,.6) 40%,rgba(160,160,160,0) 80%),conic-gradient(#c8c8c8 25%,#fff 0 50%,#c8c8c8 0 75%,#fff 0) 0 0/8px 8px;box-shadow:inset 0 0 0 .5px #a8a8a8"></div>
<div class="abs" style="left:63.2px;top:0.0px;width:31.6px;height:31.7px;background:linear-gradient(135deg,#000 10%,#555 45%,#fff 85%);box-shadow:inset 0 0 0 .5px #a8a8a8"></div>
<div class="abs" style="left:94.8px;top:0.0px;width:31.6px;height:31.7px;background:linear-gradient(135deg,#e20010 18%,#7a2a12 50%,#007020 78%);box-shadow:inset 0 0 0 .5px #a8a8a8"></div>
<div class="abs" style="left:126.4px;top:0.0px;width:31.6px;height:31.7px;background:linear-gradient(135deg,#2a007c 15%,#8a3850 50%,#f07a00 85%);box-shadow:inset 0 0 0 .5px #a8a8a8"></div>
<div class="abs" style="left:158.0px;top:0.0px;width:31.6px;height:31.7px;background:linear-gradient(135deg,#0a00b8 20%,#e80000 50%,#ffee00 82%);box-shadow:inset 0 0 0 .5px #a8a8a8"></div>
<div class="abs" style="left:189.6px;top:0.0px;width:31.6px;height:31.7px;background:linear-gradient(135deg,#0a00b8 26%,#ffee00 44%,#ffee00 56%,#0a00b8 74%);box-shadow:inset 0 0 0 .5px #a8a8a8"></div>
<div class="abs" style="left:221.2px;top:0.0px;width:31.6px;height:31.7px;background:linear-gradient(135deg,#f05a00 20%,#ffee00 42%,#ffee00 58%,#f05a00 80%);box-shadow:inset 0 0 0 .5px #a8a8a8"></div>
<div class="abs" style="left:252.8px;top:0.0px;width:31.6px;height:31.7px;background:linear-gradient(135deg,#78007c 15%,#007a20 50%,#f07a00 85%);box-shadow:inset 0 0 0 .5px #a8a8a8"></div>
<div class="abs" style="left:0.0px;top:31.7px;width:31.6px;height:31.7px;background:linear-gradient(135deg,#fff000 18%,#70007c 40%,#f07800 62%,#003090 82%);box-shadow:inset 0 0 0 .5px #a8a8a8"></div>
<div class="abs" style="left:31.6px;top:31.7px;width:31.6px;height:31.7px;background:linear-gradient(135deg,#8a4420 10%,#f5d4c4 38%,#6e2a14 62%,#f3dccc 90%);box-shadow:inset 0 0 0 .5px #a8a8a8"></div>
<div class="abs" style="left:63.2px;top:31.7px;width:31.6px;height:31.7px;background:linear-gradient(135deg,#2a8ad8 8%,#fff 49%,#a86800 50%,#ffd840 62%,#fff 85%);box-shadow:inset 0 0 0 .5px #a8a8a8"></div>
<div class="abs" style="left:94.8px;top:31.7px;width:31.6px;height:31.7px;background:linear-gradient(135deg,#ff0000 18%,#ff00ff 30%,#0000ff 42%,#00ffff 52%,#00ff00 62%,#ffff00 74%,#ff0000 86%);box-shadow:inset 0 0 0 .5px #a8a8a8"></div>
<div class="abs" style="left:126.4px;top:31.7px;width:31.6px;height:31.7px;background:linear-gradient(135deg,rgba(255,0,0,0) 22%,#ff0000 30%,#ff00ff 38%,#0000ff 46%,#00ffff 54%,#00ff00 62%,#ffff00 70%,#ff0000 76%,rgba(255,0,0,0) 84%),conic-gradient(#c8c8c8 25%,#fff 0 50%,#c8c8c8 0 75%,#fff 0) 0 0/8px 8px;box-shadow:inset 0 0 0 .5px #a8a8a8"></div>
<div class="abs" style="left:158.0px;top:31.7px;width:31.6px;height:31.7px;background:linear-gradient(135deg,#444 0,#444 27%,#fff 27.0%,#fff 32.4%,#000 32.4%,#000 37.8%,#fff 37.8%,#fff 43.2%,#000 43.2%,#000 48.6%,#fff 48.6%,#fff 54.0%,#000 54.0%,#000 59.4%,#fff 59.4%,#fff 64.8%,#000 64.8%,#000 70.2%,#fff 70.2%,#fff 75.6%,#000 75.6%,#000 81.0%,#fff 81.0%,#fff 86.4%,rgba(0,0,0,0) 86.4%),conic-gradient(#c8c8c8 25%,#fff 0 50%,#c8c8c8 0 75%,#fff 0) 0 0/8px 8px;box-shadow:inset 0 0 0 .5px #a8a8a8"></div>
<div class="abs" style="left:189.6px;top:31.7px;width:31.6px;height:31.7px;background:linear-gradient(135deg,rgba(110,110,110,.45),rgba(150,150,150,.15) 45%,rgba(200,200,200,0) 70%),conic-gradient(#c8c8c8 25%,#fff 0 50%,#c8c8c8 0 75%,#fff 0) 0 0/8px 8px;box-shadow:inset 0 0 0 .5px #a8a8a8"></div>
<div class="abs" style="left:221.2px;top:31.7px;width:31.6px;height:31.7px;background:linear-gradient(135deg,#e6e2cc 10%,#fffff8 40%,#9c947c 62%,#e8e4d4 85%);box-shadow:inset 0 0 0 .5px #a8a8a8"></div>
<div class="abs" style="left:252.8px;top:31.7px;width:31.6px;height:31.7px;background:linear-gradient(135deg,#a4007c 12%,#f08c00 42%,#f0f000 60%,#30b030 88%);box-shadow:inset 0 0 0 .5px #a8a8a8"></div>
<div class="abs" style="left:0.0px;top:63.4px;width:31.6px;height:31.7px;background:linear-gradient(135deg,#f06000 12%,#ffe430 35%,#fff690 50%,#2868c8 72%,#1040a0 90%);box-shadow:inset 0 0 0 .5px #a8a8a8"></div>
<div class="abs" style="left:31.6px;top:63.4px;width:31.6px;height:31.7px;background:linear-gradient(135deg,#30c020 15%,#78c030 38%,#f08830 60%,#e85050 88%);box-shadow:inset 0 0 0 .5px #a8a8a8"></div>
<div class="abs" style="left:63.2px;top:63.4px;width:31.6px;height:31.7px;background:linear-gradient(135deg,#f0985c 12%,#e85020 40%,#ffb898 52%,#e86030 60%,#fff 90%);box-shadow:inset 0 0 0 .5px #a8a8a8"></div>
<div class="abs" style="left:94.8px;top:63.4px;width:31.6px;height:31.7px;background:linear-gradient(135deg,#3c1000 8%,#f07000 35%,#fff000 58%,#f04000 88%);box-shadow:inset 0 0 0 .5px #a8a8a8"></div>
<div class="abs" style="left:126.4px;top:63.4px;width:31.6px;height:31.7px;background:linear-gradient(135deg,#801010 10%,#f06020 35%,#301000 50%,#000 65%,#f07010 92%);box-shadow:inset 0 0 0 .5px #a8a8a8"></div>
<div class="abs" style="left:158.0px;top:63.4px;width:31.6px;height:31.7px;background:linear-gradient(135deg,#900000 10%,#e81010 35%,#600000 58%,#fff 90%);box-shadow:inset 0 0 0 .5px #a8a8a8"></div>
<div class="abs" style="left:189.6px;top:63.4px;width:31.6px;height:31.7px;background:linear-gradient(135deg,#700010 10%,#e02020 38%,#000 62%,#c00000 88%);box-shadow:inset 0 0 0 .5px #a8a8a8"></div>
<div class="abs" style="left:221.2px;top:63.4px;width:31.6px;height:31.7px;background:linear-gradient(135deg,#fff 12%,#e00010 40%,#000 62%,#e00000 90%);box-shadow:inset 0 0 0 .5px #a8a8a8"></div>
<div class="abs" style="left:252.8px;top:63.4px;width:31.6px;height:31.7px;background:linear-gradient(135deg,#c40040 12%,#a01050 40%,#f4a8c8 58%,#e06090 90%);box-shadow:inset 0 0 0 .5px #a8a8a8"></div>
<div class="abs" style="left:0.0px;top:95.1px;width:31.6px;height:31.7px;background:linear-gradient(135deg,#f4a400 12%,#e02880 55%,#901080 90%);box-shadow:inset 0 0 0 .5px #a8a8a8"></div>
<div class="abs" style="left:31.6px;top:95.1px;width:31.6px;height:31.7px;background:linear-gradient(135deg,#107010 10%,#fff000 42%,#208010 55%,#e0d000 70%,#186010 92%);box-shadow:inset 0 0 0 .5px #a8a8a8"></div>
<div class="abs" style="left:63.2px;top:95.1px;width:31.6px;height:31.7px;background:linear-gradient(135deg,#104010 10%,#40ff40 48%,#000 62%,#20a020 92%);box-shadow:inset 0 0 0 .5px #a8a8a8"></div>
<div class="abs" style="left:94.8px;top:95.1px;width:31.6px;height:31.7px;background:linear-gradient(135deg,#205020 15%,#fff 30%,#48a048 38%,#306030 70%,#fff 86%);box-shadow:inset 0 0 0 .5px #a8a8a8"></div>
<div class="abs" style="left:126.4px;top:95.1px;width:31.6px;height:31.7px;background:linear-gradient(135deg,#000 10%,#b4e4b4 52%,#104010 90%);box-shadow:inset 0 0 0 .5px #a8a8a8"></div>
<div class="abs" style="left:158.0px;top:95.1px;width:31.6px;height:31.7px;background:linear-gradient(135deg,#008484 12%,#20f4d4 50%,#00a0a0 88%);box-shadow:inset 0 0 0 .5px #a8a8a8"></div>
<div class="abs" style="left:189.6px;top:95.1px;width:31.6px;height:31.7px;background:linear-gradient(135deg,#002060 12%,#80e4ff 45%,#1050c0 55%,#2464e4 90%);box-shadow:inset 0 0 0 .5px #a8a8a8"></div>
<div class="abs" style="left:221.2px;top:95.1px;width:31.6px;height:31.7px;background:linear-gradient(135deg,#888 10%,#303030 35%,#4090f0 55%,#000 85%);box-shadow:inset 0 0 0 .5px #a8a8a8"></div>
<div class="abs" style="left:252.8px;top:95.1px;width:31.6px;height:31.7px;background:linear-gradient(135deg,#8080b0 10%,#a4a4d4 40%,#f4f4ff 48%,#9090c4 56%,#8a8ac0 90%);box-shadow:inset 0 0 0 .5px #a8a8a8"></div>
<div class="abs" style="left:0.0px;top:126.8px;width:31.6px;height:2px;background:#c050c0"></div>
<div class="abs" style="left:31.6px;top:126.8px;width:31.6px;height:2px;background:#704090"></div>
<div class="abs" style="left:63.2px;top:126.8px;width:31.6px;height:2px;background:#a08080"></div>
<div class="abs" style="left:94.8px;top:126.8px;width:31.6px;height:2px;background:#c07070"></div>
<div class="abs" style="left:126.4px;top:126.8px;width:31.6px;height:2px;background:#a09090"></div>
<div class="abs" style="left:158.0px;top:126.8px;width:31.6px;height:2px;background:#b0a0a0"></div>
<div class="abs" style="left:189.6px;top:126.8px;width:31.6px;height:2px;background:#a0a0a0"></div>
<div class="abs" style="left:221.2px;top:126.8px;width:31.6px;height:2px;background:#c0c0c0"></div>
<div class="abs" style="left:252.8px;top:126.8px;width:31.6px;height:2px;background:#a0a040"></div>
 </div>
 <!-- scrollbar -->
 <div class="abs" style="left:325px;top:69px;width:17px;height:129px;background:#f0f0f0"></div>
 <div class="abs" style="left:330px;top:75px;border:3.500px solid transparent;border-bottom:4px solid #222;border-top:0"></div>
 <div class="abs" style="left:330px;top:188px;border:3.500px solid transparent;border-top:4px solid #222;border-bottom:0"></div>
 <div class="abs" style="left:327px;top:87px;width:13px;height:8px;background:linear-gradient(#d0d0d0,#a8a8a8);border:1px solid #888;border-radius:1px"></div>

 <!-- buttons -->
 <div class="btn" style="left:368px;top:53px;width:72px;height:21px;border:1px solid #555;box-shadow:inset 0 0 0 1px #888, inset 0 0 0 2px #fff;padding-top:3px">OK</div>
 <div class="btn" style="left:368px;top:83px;width:72px;height:20px;padding-top:2px">Cancel</div>
 <div class="btn" style="left:368px;top:119px;width:72px;height:20px;padding-top:2px">Load...</div>
 <div class="btn" style="left:368px;top:149px;width:72px;height:20px;padding-top:2px">Save...</div>

 <!-- name -->
 <div class="t" style="left:25px;top:228px">Name:</div>
 <div class="inp" style="left:79px;top:226px;width:285px;height:20px"><span class="t" style="left:5px;top:2px">Two Color</span></div>
 <div class="btn" style="left:381px;top:225px;width:58px;height:20px;padding-top:2px">New</div>
 <svg class="abs" style="left:355px;top:229px" width="9" height="19" viewBox="0 0 9 19"><path d="M1 1.500c2 0 3.500.5 3.500 2v12c0 1.500-1.500 2-3.500 2M8 1.500c-2 0-3.500.5-3.500 2M4.500 15.500c0 1.500 1.500 2 3.500 2M2.500 9.500h4" fill="none" stroke="#111" stroke-width="1.300"/></svg>

 <!-- gradient type group -->
 <div class="gb" style="left:24px;top:269px;width:414px;height:223px"></div>
 <div class="t" style="left:50px;top:265px;background:#dedede;padding:0 5px">Gradient Type:</div>
 <div class="abs" style="left:140px;top:262px;width:66px;height:22px;background:#dedede"></div>
 <div class="btn" style="left:142px;top:264px;width:61px;height:19px;text-align:left;padding:1px 0 0 8px">Solid<span class="abs" style="right:5px;top:3px;border:3px solid transparent;border-bottom:4px solid #111;border-top:0"></span><span class="abs" style="right:5px;top:9px;border:3px solid transparent;border-top:4px solid #111;border-bottom:0"></span></div>
 <div class="t" style="left:35px;top:297px">Smoothness:</div>
 <div class="inp" style="left:113px;top:295px;width:52px;height:21px"><span class="t" style="left:5px;top:2px">100</span><div class="abs" style="left:30px;top:0;width:20px;height:19px;background:linear-gradient(#f4f4f4,#e2e2e2);border-left:1px solid #aaa;border-radius:0 2px 2px 0"></div><span class="abs" style="left:38px;top:8px;border:2.500px solid transparent;border-top:3px solid #111;border-bottom:0"></span></div>
 <div class="t" style="left:171px;top:297px">%</div>
 <!-- gradient bar -->
 <div class="abs" style="left:38px;top:341px;width:387px;height:26px;border:1px solid #777;background:linear-gradient(to right,#000 0%,#1a1a1a 15%,#4a4a4a 35%,#8a8a8a 55%,#c8c8c8 75%,#f6f6f6 95%,#fff 100%)"></div>
 <!-- opacity stops -->
 <svg class="abs" style="left:35px;top:324px" width="12" height="18" viewBox="0 0 12 18"><path d="M1 1h10v10l-5 5.500-5-5.500z" fill="#e8e8e8" stroke="#4a4a4a" stroke-width="1.100"/><rect x="3" y="3" width="6" height="6" fill="#000"/></svg>
 <svg class="abs" style="left:416px;top:324px" width="12" height="18" viewBox="0 0 12 18"><path d="M1 1h10v10l-5 5.500-5-5.500z" fill="#e8e8e8" stroke="#4a4a4a" stroke-width="1.100"/><rect x="3" y="3" width="6" height="6" fill="#000"/></svg>
 <!-- color stops -->
 <svg class="abs" style="left:35px;top:367px" width="12" height="18" viewBox="0 0 12 18"><path d="M1 17h10V7L6 1.500 1 7z" fill="#e8e8e8" stroke="#4a4a4a" stroke-width="1.100"/><rect x="3" y="9" width="6" height="6" fill="#000"/></svg>
 <svg class="abs" style="left:416px;top:367px" width="12" height="18" viewBox="0 0 12 18"><path d="M1 17h10V7L6 1.500 1 7z" fill="#fff" stroke="#4a4a4a" stroke-width="1.100"/></svg>

 <!-- stops group -->
 <div class="gb" style="left:33px;top:400px;width:397px;height:83px"></div>
 <div class="t" style="left:51px;top:392px;background:#dedede;padding:0 5px">Stops</div>
 <div class="t dis" style="left:62px;top:420px">Opacity:</div>
 <div class="dinp" style="left:113px;top:417px;width:52px;height:21px"><div class="abs" style="left:30px;top:0;width:1px;height:19px;background:#c4c4c4"></div><span class="abs" style="left:37px;top:8px;border:3px solid transparent;border-top:4px solid #666;border-bottom:0"></span></div>
 <div class="t dis" style="left:171px;top:420px">%</div>
 <div class="t dis" style="left:213px;top:420px">Location:</div>
 <div class="dinp" style="left:268px;top:417px;width:42px;height:21px"></div>
 <div class="t dis" style="left:317px;top:420px">%</div>
 <div class="dbtn" style="left:351px;top:417px;width:68px;height:20px;padding-top:2px">Delete</div>
 <div class="t dis" style="left:74px;top:454px">Color:</div>
 <div class="dinp" style="left:112px;top:451px;width:62px;height:21px;background:#dcdcdc"><div class="abs" style="left:43px;top:0;width:1px;height:19px;background:#c4c4c4"></div><span class="abs" style="left:50px;top:5px;border:4.500px solid transparent;border-left:6px solid #bdbdbd;border-right:0"></span></div>
 <div class="t dis" style="left:213px;top:454px">Location:</div>
 <div class="dinp" style="left:268px;top:451px;width:42px;height:21px"></div>
 <div class="t dis" style="left:317px;top:454px">%</div>
 <div class="dbtn" style="left:351px;top:452px;width:68px;height:20px;padding-top:2px">Delete</div>
</div>
</div></body></html>
